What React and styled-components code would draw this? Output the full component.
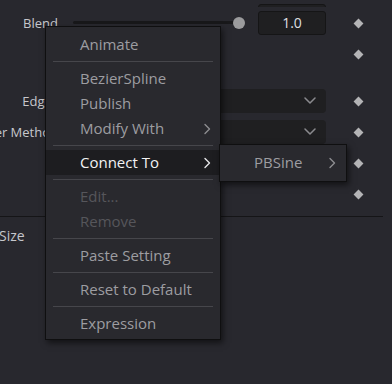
import React from "react";
import styled, { createGlobalStyle } from "styled-components";

const menuItems = [
  { label: "Animate" },
  { sep: true },
  { label: "BezierSpline" },
  { label: "Publish" },
  { label: "Modify With", sub: true },
  { sep: true },
  { label: "Connect To", sub: true, state: "active" },
  { sep: true },
  { label: "Edit...", state: "disabled" },
  { label: "Remove", state: "disabled" },
  { sep: true },
  { label: "Paste Setting" },
  { sep: true },
  { label: "Reset to Default" },
  { sep: true },
  { label: "Expression" },
];

function Chevron({ color }) {
  return (
    <svg width="8" height="12" viewBox="0 0 8 12">
      <path
        d="M2 1.5 L6.5 6 L2 10.5"
        fill="none"
        stroke={color}
        strokeWidth="1.4"
        strokeLinecap="round"
        strokeLinejoin="round"
      />
    </svg>
  );
}

function DownArrow() {
  return (
    <svg width="12" height="7" viewBox="0 0 12 7">
      <path
        d="M1 1 L6 6 L11 1"
        fill="none"
        stroke="#8a8a8e"
        strokeWidth="1.5"
        strokeLinecap="round"
        strokeLinejoin="round"
      />
    </svg>
  );
}

function App() {
  return (
    <>
      <GlobalStyle />
      <Panel>
        <ClipRow>
          <span />
          <ControlCell>
            <SliderSpace />
            <ValueBox />
          </ControlCell>
        </ClipRow>

        <ParamRow>
          <Label>Blend</Label>
          <ControlCell>
            <Slider>
              <Track />
              <Thumb />
            </Slider>
            <ValueBox>1.0</ValueBox>
          </ControlCell>
          <Diamond />
        </ParamRow>

        <ParamRow>
          <Label />
          <ControlCell />
          <Diamond />
        </ParamRow>

        <Spacer />

        <ParamRow>
          <Label>Edges</Label>
          <Dropdown>
            <DownArrow />
          </Dropdown>
          <Diamond />
        </ParamRow>

        <ParamRow>
          <Label>Filter Method</Label>
          <Dropdown>
            <DownArrow />
          </Dropdown>
          <Diamond />
        </ParamRow>

        <ParamRow>
          <Label />
          <ControlCell />
          <Diamond />
        </ParamRow>

        <ParamRow>
          <Label />
          <ControlCell />
          <Diamond />
        </ParamRow>

        <Divider />
        <SectionTitle>Size</SectionTitle>

        <ContextMenu>
          {menuItems.map((item, i) =>
            item.sep ? (
              <Separator key={i} />
            ) : (
              <MenuItem key={i} $state={item.state}>
                <span>{item.label}</span>
                {item.sub && (
                  <Chevron
                    color={item.state === "active" ? "#e6e6e8" : "#8c8c90"}
                  />
                )}
              </MenuItem>
            )
          )}
        </ContextMenu>

        <SubMenu>
          <SubItem>
            <span>PBSine</span>
            <Chevron color="#8c8c90" />
          </SubItem>
        </SubMenu>
      </Panel>
    </>
  );
}

export default App;

// ─── Styled Components ────────────────────────────────────────────────────────

const GlobalStyle = createGlobalStyle`
  html, body {
    margin: 0;
    background: #28282e;
  }
  body {
    font-family: "Open Sans", "Noto Sans", sans-serif;
  }
`;

const Panel = styled.div`
  position: relative;
  width: 392px;
  height: 384px;
  overflow: hidden;
  background: #28282e;
  display: flex;
  flex-direction: column;
`;

const ParamRow = styled.div`
  display: grid;
  grid-template-columns: 70px 256px 64px;
  align-items: center;
  height: 31px;
  flex-shrink: 0;

  &:first-of-type {
    margin-top: 4px;
  }
`;

const ClipRow = styled(ParamRow)`
  height: 3px;
  overflow: hidden;
  align-items: end;
`;

const Label = styled.div`
  box-sizing: border-box;
  padding-right: 12px;
  text-align: right;
  white-space: nowrap;
  direction: rtl;
  font-size: 13px;
  color: #c6c7cc;
`;

const ControlCell = styled.div`
  display: flex;
  align-items: center;
  gap: 13px;
  height: 24px;
`;

const SliderSpace = styled.div`
  width: 175px;
`;

const Slider = styled.div`
  display: flex;
  align-items: center;
  width: 175px;
  padding-left: 3px;
  box-sizing: border-box;
`;

const Track = styled.div`
  flex: 1;
  height: 3px;
  border-radius: 2px;
  background: #18181a;
`;

const Thumb = styled.div`
  width: 12px;
  height: 12px;
  margin-left: -6px;
  border-radius: 50%;
  background: #9b9b9d;
`;

const ValueBox = styled.div`
  box-sizing: border-box;
  width: 68px;
  height: 24px;
  display: flex;
  align-items: center;
  justify-content: center;
  background: #1f1f21;
  border: 1px solid #151516;
  border-radius: 3px;
  font-size: 14px;
  color: #dedfe2;
`;

const Dropdown = styled.div`
  box-sizing: border-box;
  height: 24px;
  display: flex;
  align-items: center;
  justify-content: flex-end;
  padding-right: 10px;
  background: #1f1f21;
  border-radius: 4px;
`;

const Diamond = styled.div`
  justify-self: center;
  width: 7px;
  height: 7px;
  margin-top: 2px;
  background: #b4b4b6;
  transform: rotate(45deg);
`;

const Spacer = styled.div`
  height: 16px;
  flex-shrink: 0;
`;

const Divider = styled.div`
  width: 383px;
  height: 1px;
  margin-top: 7px;
  background: #151517;
  flex-shrink: 0;
`;

const SectionTitle = styled.div`
  margin: 9px 0 0 -1px;
  font-size: 14px;
  line-height: 20px;
  color: #c6c7cc;
`;

const ContextMenu = styled.div`
  position: absolute;
  left: 45px;
  top: 26px;
  width: 176px;
  box-sizing: border-box;
  padding: 5px 0 3px;
  background: #29292e;
  border: 1px solid #0f0f10;
  box-shadow: 2px 3px 6px rgba(0, 0, 0, 0.55);
  z-index: 1;
`;

const MenuItem = styled.div`
  box-sizing: border-box;
  height: 25px;
  display: flex;
  align-items: center;
  justify-content: space-between;
  padding: 0 9px 2px 34px;
  font-size: 15px;
  color: ${({ $state }) =>
    $state === "active"
      ? "#f2f2f4"
      : $state === "disabled"
      ? "#56565b"
      : "#9d9da1"};
  background: ${({ $state }) => ($state === "active" ? "#1d1d20" : "none")};

  svg {
    margin-top: 2px;
  }
`;

const Separator = styled.div`
  height: 1px;
  margin: 4px 7px;
  background: #46464b;
`;

const SubMenu = styled.div`
  position: absolute;
  left: 219px;
  top: 144px;
  width: 128px;
  box-sizing: border-box;
  padding: 5px 0 6px;
  background: #29292e;
  border: 1px solid #0f0f10;
  box-shadow: 2px 3px 6px rgba(0, 0, 0, 0.55);
  z-index: 2;
`;

const SubItem = styled(MenuItem)`
  padding: 0 10px 2px 34px;
`;
